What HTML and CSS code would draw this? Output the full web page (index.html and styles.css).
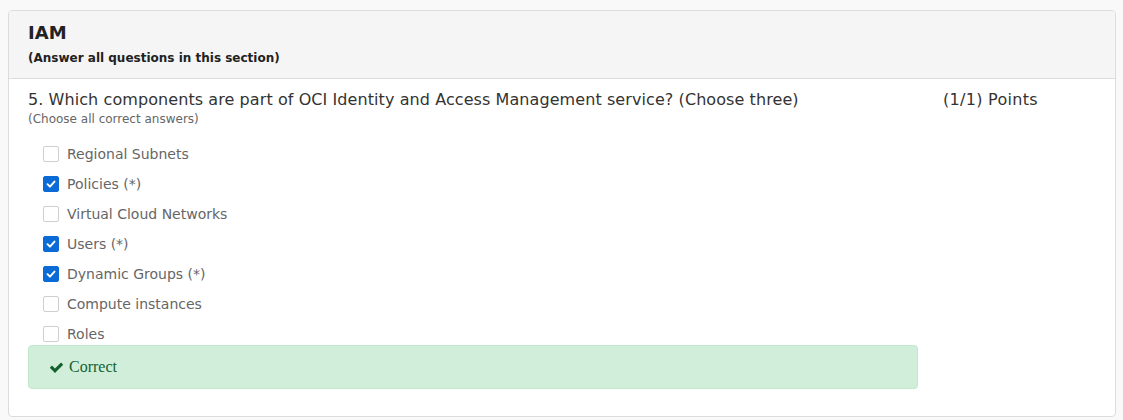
FILE: index.html
```html
<!DOCTYPE html>
<html>
<head>
<meta charset="utf-8">
<link rel="stylesheet" href="styles.css">
</head>
<body>
<div class="card">
  <div class="card-header">
    <h2 class="section-title">IAM</h2>
    <div class="section-note">(Answer all questions in this section)</div>
  </div>
  <div class="card-body">
    <div class="question">
      <div class="q-text">5. Which components are part of OCI Identity and Access Management service? (Choose three)</div>
      <div class="q-hint">(Choose all correct answers)</div>
      <ul class="options">
        <li class="option"><span class="box"></span><span>Regional Subnets</span></li>
        <li class="option"><span class="box checked"><svg viewBox="0 0 16 16"><path d="M4 8.2 L6.8 11 L12 5.2" fill="none" stroke="#fff" stroke-width="2.2" stroke-linecap="round" stroke-linejoin="round"/></svg></span><span>Policies (*)</span></li>
        <li class="option"><span class="box"></span><span>Virtual Cloud Networks</span></li>
        <li class="option"><span class="box checked"><svg viewBox="0 0 16 16"><path d="M4 8.2 L6.8 11 L12 5.2" fill="none" stroke="#fff" stroke-width="2.2" stroke-linecap="round" stroke-linejoin="round"/></svg></span><span>Users (*)</span></li>
        <li class="option"><span class="box checked"><svg viewBox="0 0 16 16"><path d="M4 8.2 L6.8 11 L12 5.2" fill="none" stroke="#fff" stroke-width="2.2" stroke-linecap="round" stroke-linejoin="round"/></svg></span><span>Dynamic Groups (*)</span></li>
        <li class="option"><span class="box"></span><span>Compute instances</span></li>
        <li class="option"><span class="box"></span><span>Roles</span></li>
      </ul>
      <div class="alert">
        <svg class="alert-icon" viewBox="0 0 1792 1792"><path fill="#14612e" d="M1671 566q0 40-28 68l-724 724-136 136q-28 28-68 28t-68-28l-136-136-362-362q-28-28-28-68t28-68l136-136q28-28 68-28t68 28l294 295 656-657q28-28 68-28t68 28l136 136q28 28 28 68z"/></svg>
        <span>Correct</span>
      </div>
    </div>
    <div class="points">(1/1) Points</div>
  </div>
</div>
</body>
</html>
```

FILE: styles.css
```css
html, body {
  margin: 0;
  padding: 0;
}
body {
  background: #f9f9f9;
  padding: 10px 7px 4px 8px;
  font-family: "DejaVu Sans", Verdana, sans-serif;
  color: #333;
}
.card {
  background: #fff;
  border: 1px solid #dcdcdc;
  border-radius: 4px;
  overflow: hidden;
}
.card-header {
  box-sizing: border-box;
  height: 68px;
  background: #f5f5f5;
  border-bottom: 1px solid #dddddd;
  padding: 11px 19px 0;
}
.section-title {
  margin: 0;
  font-size: 18px;
  font-weight: bold;
  color: #222;
  line-height: 22px;
}
.section-note {
  margin-top: 6px;
  font-size: 12px;
  font-weight: bold;
  color: #222;
  line-height: 16px;
}
.card-body {
  display: grid;
  grid-template-columns: 890px 1fr;
  column-gap: 25px;
  padding: 11px 19px 27px;
}
.q-text {
  font-size: 16px;
  line-height: 20px;
  letter-spacing: 0.08px;
  color: #333;
}
.q-hint {
  font-size: 12px;
  color: #666;
  line-height: 16px;
  margin-top: 1px;
}
.options {
  list-style: none;
  margin: 12px 0 0;
  padding: 0 0 0 15px;
}
.option {
  display: flex;
  align-items: center;
  height: 30px;
  font-size: 14px;
  color: #666;
}
.box {
  width: 14px;
  height: 14px;
  border: 1px solid #cfcfcf;
  border-radius: 2px;
  margin-right: 8px;
  background: #fff;
  display: flex;
  flex: none;
}
.box.checked {
  background: #0b6bd6;
  border-color: #0b6bd6;
}
.box svg {
  width: 14px;
  height: 14px;
}
.alert {
  margin-top: -4px;
  box-sizing: border-box;
  height: 44px;
  background: #d0eeda;
  border: 1px solid #c1e7cd;
  border-radius: 4px;
  display: flex;
  align-items: center;
  padding-left: 20px;
  font-family: "Liberation Serif", "Times New Roman", serif;
  font-size: 16px;
  color: #14612e;
}
.alert-icon {
  width: 15px;
  height: 15px;
  margin-right: 5px;
}
.points {
  font-size: 16px;
  line-height: 20px;
  letter-spacing: 0.3px;
  color: #333;
}
```
